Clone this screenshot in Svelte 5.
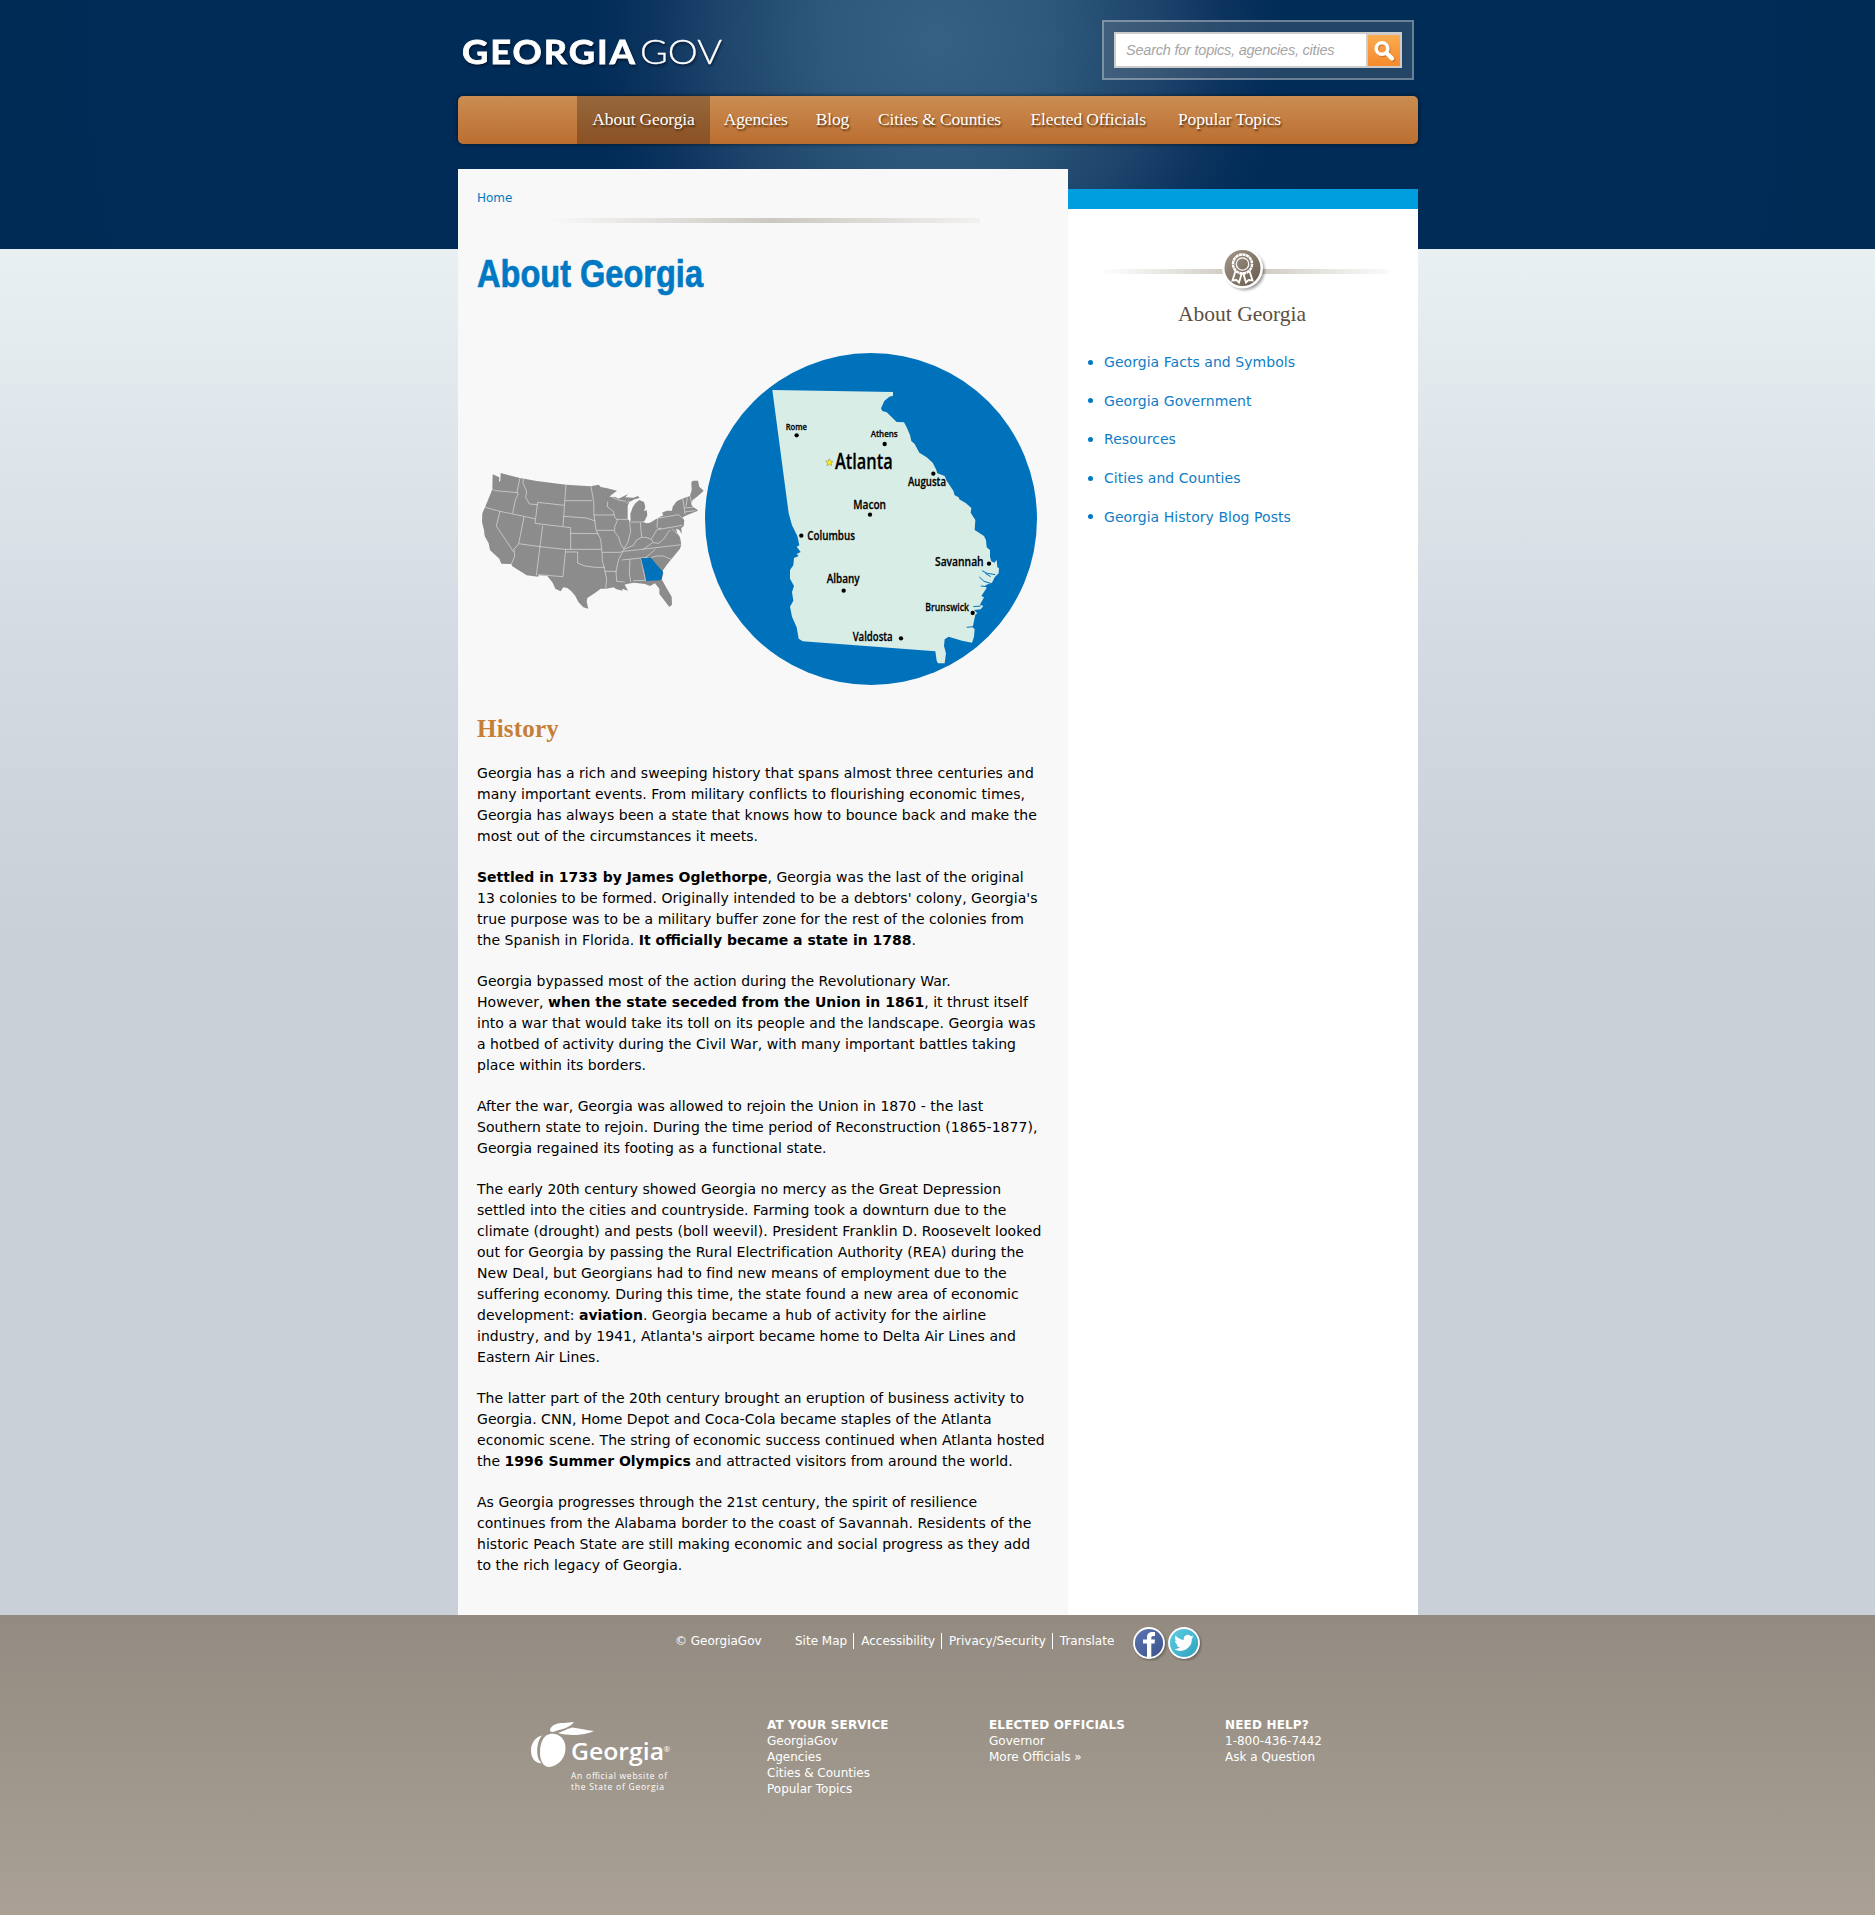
<script>
  const nav = ['About Georgia', 'Agencies', 'Blog', 'Cities & Counties', 'Elected Officials', 'Popular Topics'];
  const navWidths = [133, 91.5, 62, 152, 145.5, 137];
  const links = ['Georgia Facts and Symbols', 'Georgia Government', 'Resources', 'Cities and Counties', 'Georgia History Blog Posts'];
  const paragraphs = [
    ['Georgia has a rich and sweeping history that spans almost three centuries and', 'many important events. From military conflicts to flourishing economic times,', 'Georgia has always been a state that knows how to bounce back and make the', 'most out of the circumstances it meets.'],
    ['*Settled in 1733 by James Oglethorpe*, Georgia was the last of the original', "13 colonies to be formed. Originally intended to be a debtors' colony, Georgia's", 'true purpose was to be a military buffer zone for the rest of the colonies from', 'the Spanish in Florida. *It officially became a state in 1788*.'],
    ['Georgia bypassed most of the action during the Revolutionary War.', 'However, *when the state seceded from the Union in 1861*, it thrust itself', 'into a war that would take its toll on its people and the landscape. Georgia was', 'a hotbed of activity during the Civil War, with many important battles taking', 'place within its borders.'],
    ['After the war, Georgia was allowed to rejoin the Union in 1870 - the last', 'Southern state to rejoin. During the time period of Reconstruction (1865-1877),', 'Georgia regained its footing as a functional state.'],
    ['The early 20th century showed Georgia no mercy as the Great Depression', 'settled into the cities and countryside. Farming took a downturn due to the', 'climate (drought) and pests (boll weevil). President Franklin D. Roosevelt looked', 'out for Georgia by passing the Rural Electrification Authority (REA) during the', 'New Deal, but Georgians had to find new means of employment due to the', 'suffering economy. During this time, the state found a new area of economic', 'development: *aviation*. Georgia became a hub of activity for the airline', "industry, and by 1941, Atlanta's airport became home to Delta Air Lines and", 'Eastern Air Lines.'],
    ['The latter part of the 20th century brought an eruption of business activity to', 'Georgia. CNN, Home Depot and Coca-Cola became staples of the Atlanta', 'economic scene. The string of economic success continued when Atlanta hosted', 'the *1996 Summer Olympics* and attracted visitors from around the world.'],
    ['As Georgia progresses through the 21st century, the spirit of resilience', 'continues from the Alabama border to the coast of Savannah. Residents of the', 'historic Peach State are still making economic and social progress as they add', 'to the rich legacy of Georgia.']
  ];
  const footerCols = [
    { title: 'AT YOUR SERVICE', items: ['GeorgiaGov', 'Agencies', 'Cities & Counties', 'Popular Topics'] },
    { title: 'ELECTED OFFICIALS', items: ['Governor', 'More Officials »'] },
    { title: 'NEED HELP?', items: ['1-800-436-7442', 'Ask a Question'] }
  ];
  // name, text x, baseline, text width, font size, dot x, dot y (in thirds of a pixel)
  const cities = [
    ['Rome', 287, 269, 64, 28, 320, 286],
    ['Athens', 542, 291, 81, 28, 584, 312],
    ['Augusta', 654, 438, 114, 35, 730, 401],
    ['Macon', 490, 506, 98, 35, 540, 524],
    ['Columbus', 352, 600, 143, 38, 334, 587],
    ['Savannah', 735, 679, 146, 38, 897, 671],
    ['Albany', 410, 729, 99, 36, 461, 752],
    ['Brunswick', 706, 812, 131, 34, 848, 819],
    ['Valdosta', 488, 903, 120, 36, 633, 895]
  ];
</script>

<div class="page">
  <header>
    <div class="wrap">
      <div class="top">
        <svg class="logo" width="270" height="40" viewBox="0 0 270 40">
          <text class="logo-bold" x="0" y="32" textLength="175" lengthAdjust="spacingAndGlyphs">GEORGIA</text>
          <text class="logo-thin" x="178" y="32" textLength="82" lengthAdjust="spacingAndGlyphs">GOV</text>
        </svg>
        <div class="search">
          <div class="field">Search for topics, agencies, cities</div>
          <div class="go">
            <svg width="32" height="31" viewBox="0 0 32 31"><g fill="none" stroke="#7b4a1c" stroke-opacity=".35" transform="translate(1.2 1.2)"><circle cx="14" cy="13.500" r="5.800" stroke-width="3.600"/><path d="M18.500 18l5.500 5.500" stroke-width="4.400" stroke-linecap="round"/></g><g fill="none" stroke="#fff"><circle cx="14" cy="13.500" r="5.800" stroke-width="3.600"/><path d="M18.500 18l5.500 5.500" stroke-width="4.400" stroke-linecap="round"/></g></svg>
          </div>
        </div>
      </div>
      <nav>
        {#each nav as item, i}
          <a class:active={i === 0} style:width="{navWidths[i]}px">{item}</a>
        {/each}
      </nav>
    </div>
  </header>

  <div class="wrap body">
    <main>
      <div class="crumb">Home</div>
      <div class="rule"></div>
      <svg class="title" width="230" height="50" viewBox="0 0 230 50"><text x="0" y="36" textLength="226" lengthAdjust="spacingAndGlyphs">About Georgia</text></svg>
      <svg class="map" width="570" height="360" viewBox="470 340 570 360">
        <g transform="translate(470 450) scale(.33333)">
          <path fill="#8c8c8c" d="M68 73L88 82 87 96 91 92 92 69 150 84 200 93 288 104 362 109 386 104 392 111 412 115 441 122 428 132 418 140 436 141 446 146 474 132 466 142 490 143 504 138 509 144 494 148 478 156 473 168 473 208 482 214 481 192 488 172 496 160 508 150 522 156 526 170 522 184 530 180 532 196 524 212 518 216 530 220 540 218 562 205 580 196 576 188 590 182 606 182 608 170 620 154 636 146 660 138 665 120 664 96 670 92 684 92 688 110 701 122 684 138 668 150 664 162 668 170 680 178 684 182 650 196 638 202 643 212 641 228 634 234 635 252 628 240 618 236 622 250 630 262 634 284 630 296 612 318 604 328 590 345 578 362 580 370 575 388 590 415 605 440 606 464 598 471 582 450 568 432 568 416 555 400 540 408 525 402 492 398 470 402 464 404 474 422 456 416 458 422 440 418 430 412 410 416 392 416 376 428 352 444 350 455 355 476 340 472 325 456 316 438 304 424 292 414 280 412 272 424 256 416 248 398 232 378 206 376 204 380 170 376 127 349 124 342 94 341 88 326 66 306 60 300 56 280 44 258 42 240 36 216 37 190 45 172 54 150 67 118z"/>
          <g fill="none" stroke="#fff" stroke-opacity=".85" stroke-width="1.700">
            <path d="M67 118L76 122 100 124 143 128M150 84L141 126 145 132 136 150 128 190M160 87L159 100 170 124 167 142 178 162 203 164M45 172L90 184 195 206M90 184L79 228 131 306M145 282L138 292 132 296 134 320 124 342M203 157L283 166M203 157L195 220 302 233M162 201L146 281 210 290 284 298M218 227L199 376M288 104L279 229M284 152H367M281 199L349 204 376 213M302 233V298M302 250L386 251M284 298H394M287 298L279 380 204 374M287 306H323V339L345 348 375 352 404 352M363 109L371 155 372 195 378 240 392 268 396 307 397 332 403 355 410 388 407 416M371 195H432M380 241H432M396 307H450L458 304M404 364H440M413 155L412 170 430 184 434 200 442 212 434 230 434 246 446 262 452 282 462 298 446 328 438 364 440 394 464 396M440 208H473M478 209L482 244 474 276 462 296M424 140L444 150 468 154M482 216L518 216M511 218L515 262 500 270 490 286 462 298M515 262L528 262 544 268 560 240 574 234M563 204L561 230 568 238 636 226M561 205L626 194 638 206M638 145L643 175 645 192M652 142L648 170M660 138L666 164M643 174L668 172M643 186L676 182M460 304L516 298 634 284M456 330L532 322M480 328L478 370 482 396M513 325L526 390M490 392L528 391M526 324L556 298M543 323L560 318 580 318 604 328M544 268L550 278 566 280 580 268 594 248 600 240M606 236L624 254M520 298L548 278M478 152L470 160"/>
          </g>
          <path fill="#0072bc" d="M513 325L543 323 560 344 579 365 575 388 569 391 529 393 524 368z"/>
        </g>
        <g transform="translate(690 340) scale(.33333)">
          <circle cx="543" cy="537" r="498" fill="#0072bc"/>
          <path fill="#d9ede7" d="M247 150L609 156 609 167 598 170 583 183 573 205 577 213 590 217 604 230 620 246 642 247 650 262 660 285 664 303 674 312 688 338 710 352 728 368 738 388 742 400 764 408 770 422 778 434 790 452 794 466 806 472 808 478 828 490 844 504 842 518 856 540 854 570 882 588 888 600 890 622 900 630 900 652 904 664 913 668 920 660 922 682 927 684 926 700 914 712 906 728 886 736 890 744 874 768 882 772 870 794 880 798 872 808 852 810 862 820 856 824 848 862 854 868 852 890 846 908 816 902 776 890 764 898 762 918 768 940 764 970 744 970 740 962 736 934 338 904 326 896 320 862 306 830 300 800 310 782 306 756 312 738 300 716 300 690 310 676 312 654 326 648 320 642 332 636 320 620 328 616 322 588 306 556 296 520z"/>
          <g fill="none" stroke="#0072bc" stroke-width="3"><path d="M876 692L892 700 916 704M886 700L902 710M868 711L882 724 902 730M872 738L892 740M850 800L872 798M830 862L850 860"/></g>
          {#each cities as c}
            <text class="city" x={c[1]} y={c[2]} font-size={c[4]} textLength={c[3]} lengthAdjust="spacingAndGlyphs">{c[0]}</text>
            <circle cx={c[5]} cy={c[6]} r="6.500" />
          {/each}
          <text class="city" x="435" y="388" font-size="62" textLength="173" lengthAdjust="spacingAndGlyphs">Atlanta</text>
          <path fill="#ffec19" stroke="#8d8730" stroke-width="1.500" d="M418 356l3 7 8 1-6 5 2 8-7-4-7 4 2-8-6-5 8-1z"/>
        </g>
      </svg>
      <h2>History</h2>
      {#each paragraphs as lines}
        <p>
          {#each lines as line}
            <span class="line">{#each line.split('*') as part, k}{#if k % 2}<b>{part}</b>{:else}{part}{/if}{/each}</span>
          {/each}
        </p>
      {/each}
    </main>
    <aside>
      <div class="ribbon">
        <svg width="350" height="60" viewBox="0 0 350 60">
          <defs>
            <linearGradient id="fade"><stop offset="0" stop-color="#d0ccc4" stop-opacity="0"/><stop offset=".5" stop-color="#c8c4ba"/><stop offset="1" stop-color="#d0ccc4" stop-opacity=".1"/></linearGradient>
            <linearGradient id="disc" x2="1" y2="1"><stop offset="0" stop-color="#a3988a"/><stop offset="1" stop-color="#675a4b"/></linearGradient>
            <filter id="soft" x="-30%" y="-30%" width="160%" height="160%"><feGaussianBlur stdDeviation="1.500"/></filter>
          </defs>
          <rect x="31" y="20" width="290" height="5" fill="url(#fade)"/>
          <circle cx="177" cy="21.500" r="19.500" fill="#000" opacity=".4" filter="url(#soft)"/>
          <circle cx="174.500" cy="19" r="20.500" fill="#fff"/>
          <circle cx="174.500" cy="19" r="18" fill="url(#disc)"/>
          <g fill="none" stroke="#fff">
            <circle cx="174.500" cy="15" r="9.500" stroke-width="2.500" stroke-dasharray="3.200 .5"/>
            <circle cx="174.500" cy="15" r="6.200" stroke-width="1.300"/>
            <path stroke-width="1.800" d="M167.500 22l-3 9.500 4-.5 2.500 2.500 3-10M181.500 22l3 9.500-4-.5-2.500 2.500-3-10"/>
          </g>
        </svg>
      </div>
      <h3>About Georgia</h3>
      <ul>
        {#each links as link}<li><i></i>{link}</li>{/each}
      </ul>
    </aside>
  </div>

  <footer>
    <div class="legal">
      <span class="copy">© GeorgiaGov</span>
      <span class="sep">Site Map</span><span class="sep">Accessibility</span><span class="sep">Privacy/Security</span><span class="last">Translate</span>
      <svg width="70" height="36" viewBox="0 0 70 36">
        <defs>
          <linearGradient id="fb" x2="1" y2="1"><stop offset="0" stop-color="#5d77b5"/><stop offset="1" stop-color="#3a5187"/></linearGradient>
          <linearGradient id="tw" x2="1" y2="1"><stop offset="0" stop-color="#5cd0e6"/><stop offset="1" stop-color="#2f9fbb"/></linearGradient>
        </defs>
        <g fill="#000" opacity=".35" filter="url(#soft)"><circle cx="18.500" cy="19.500" r="15.500"/><circle cx="53.500" cy="19.500" r="15.500"/></g>
        <circle cx="17" cy="18" r="15" fill="url(#fb)" stroke="#fff" stroke-width="1.800"/>
        <circle cx="52" cy="18" r="15" fill="url(#tw)" stroke="#fff" stroke-width="1.800"/>
        <path fill="#fff" d="M15 33V18.500h-4v-4h4V12.500c0-3.900 2.200-5.500 5.500-5.500H23v4h-1.700c-1.600 0-2 .7-2 2v1.500H23l-.5 4h-3.200V33z"/>
        <path fill="#fff" transform="translate(42.200 8) scale(.82)" d="M24 4.600a10 10 0 0 1-2.800.8 5 5 0 0 0 2.100-2.700c-1 .6-2 1-3.100 1.200a4.900 4.900 0 0 0-8.400 4.500A14 14 0 0 1 1.700 3.200a4.900 4.900 0 0 0 1.500 6.500c-.8 0-1.500-.2-2.200-.6a4.900 4.900 0 0 0 3.900 4.900c-.7.200-1.500.2-2.200.1a4.900 4.900 0 0 0 4.600 3.400A10 10 0 0 1 0 19.500 14 14 0 0 0 21.500 7.100c1-.7 1.800-1.500 2.500-2.500z"/>
      </svg>
    </div>
    <div class="cols">
      <svg class="peach" width="150" height="80" viewBox="0 0 150 80">
        <g fill="#fff">
          <path d="M16 15.500c9-5 19.500 1 19.500 12.500 0 10-6 16-13.500 18.500-8 2.500-12-5.500-12-13.500 0-8 2-14 6-17.500z"/>
          <path d="M12 15.500C7 21 6 32 8.500 39l3 4.500C5 43 1 38 1 30.500c0-8 5-13.500 11-15z"/>
          <path d="M20 9.500c2-5 7-6.500 14-6.500l10-1c-4 5-9 6.500-15 8-4 1-9 4-9-.5z"/>
          <path d="M28 13c3-1 9-4 14-5.500 6 1 15 2.500 22 3.500-8 4-24 5.500-36 2z"/>
          <text class="pg" x="41" y="39.500" textLength="93" lengthAdjust="spacingAndGlyphs">Georgia</text>
          <text class="pr" x="133.500" y="32">®</text>
          <text class="ps" x="41" y="58.500" textLength="96">An official website of</text>
          <text class="ps" x="41" y="70" textLength="93">the State of Georgia</text>
        </g>
      </svg>
      {#each footerCols as col}
        <div class="col"><b>{col.title}</b>{#each col.items as item}<span>{item}</span>{/each}</div>
      {/each}
    </div>
  </footer>
</div>

<style>
  :global(body) { margin: 0; }
  .page { min-height: 1915px; display: flex; flex-direction: column; font-family: 'DejaVu Sans', sans-serif; background: linear-gradient(#e9f0f2 249px, #d4dae2 650px, #c9d0d8 940px); }
  .wrap { width: 960px; margin: 0 auto 0 458px; }
  header { height: 249px; background: radial-gradient(circle at 937px 40px, #366184 0, #2f597c 110px, #1d446b 220px, #0b335e 290px, #002c57 350px, #002b55 100%); }
  .top { display: flex; justify-content: space-between; height: 76px; padding: 20px 4px 0 4px; }
  .logo { margin-top: 12px; filter: drop-shadow(1px 2px 1px rgba(0, 10, 30, 0.6)); fill: #fff; }
  .logo-bold { font: 700 33px Lato, sans-serif; letter-spacing: 1.800px; stroke: #fff; stroke-width: 0.8px; }
  .logo-thin { font: 300 33px Lato, sans-serif; stroke: #fff; stroke-width: 0.3px; }
  .search { box-sizing: border-box; width: 312px; height: 60px; border: 2px solid rgba(255, 255, 255, 0.32); background: rgba(160, 160, 160, 0.22); padding: 10px; display: flex; }
  .field { box-sizing: border-box; width: 254px; height: 36px; border: 2px solid #ccc; background: #fff; color: #a5a5a5; font: italic 14.500px/32px 'Liberation Sans', sans-serif; letter-spacing: -0.220px; padding-left: 10px; white-space: nowrap; }
  .go { box-sizing: border-box; width: 34px; height: 36px; border: 2px solid #ccc; border-width: 3px 2px 2px 0; background: linear-gradient(#fbab50, #f6892c); }
  .go svg { display: block; }
  nav { box-sizing: border-box; height: 48px; padding-left: 119px; display: flex; border-radius: 5px; background: linear-gradient(#cb8d52, #bc6e31); box-shadow: 0 0 4px rgba(0, 0, 0, 0.6); }
  nav a { text-align: center; color: #fff; font: 17.500px/47px 'Liberation Serif', serif; letter-spacing: -0.140px; text-shadow: 1px 2px 2px rgba(60, 30, 0, 0.8); white-space: nowrap; }
  nav a.active { background: rgba(0, 0, 0, 0.26); }
  .body { flex: none; display: flex; height: 1446px; margin-top: -80px; }
  main { box-sizing: border-box; width: 610px; background: #f8f8f8; padding: 20px 0 0 19px; }
  .crumb { color: #0079c4; font-size: 12px; line-height: 18px; }
  .rule { width: 430px; height: 5px; margin: 11px 0 0 73px; background: linear-gradient(90deg, rgba(205, 201, 192, 0), #ccc8c0 52%, rgba(205, 201, 192, 0.15)); }
  .title { display: block; margin-top: 28px; overflow: visible; font: 700 39px 'Liberation Sans Narrow', 'Liberation Sans', sans-serif; fill: #0079c4; stroke: #0079c4; stroke-width: 0.7px; }
  .map { display: block; margin: 39px 0 0 -7px; font-family: 'Open Sans', sans-serif; font-weight: 600; }
  .city { stroke: #000; stroke-width: 0.8px; }
  h2 { margin: 14px 0 20px; color: #c67f38; font: 700 25px/29px 'Liberation Serif', serif; letter-spacing: 0.200px; }
  p { margin: 0 0 20px; font-size: 14px; line-height: 21px; letter-spacing: 0.035px; color: #000; }
  b { letter-spacing: 0; }
  .line { display: block; white-space: nowrap; }
  aside { box-sizing: border-box; width: 350px; margin-top: 20px; border-top: 20px solid #009ddf; background: #fff; }
  .ribbon { margin-top: 40px; height: 60px; }
  .ribbon svg, .peach { display: block; }
  h3 { margin: -7px 2px 0 0; text-align: center; color: #5c4f42; font: 400 21.500px/24px 'Liberation Serif', serif; }
  ul { list-style: none; margin: 26px 0 0 20px; padding: 0; }
  li { display: flex; align-items: center; color: #0f7dc5; font-size: 14px; line-height: 20px; letter-spacing: 0.050px; margin-bottom: 18.700px; }
  i { width: 5px; height: 5px; border-radius: 50%; background: #0079c4; margin-right: 11px; }
  footer { flex: 1; background: linear-gradient(#938b81, #aaa194); color: #fff; font-size: 12px; }
  .legal { display: flex; height: 72px; padding: 10px 0 0 675px; line-height: 16px; box-sizing: border-box; }
  .legal span { margin-top: 8px; height: 16px; white-space: nowrap; }
  .copy { width: 120px; }
  .sep { border-right: 1px solid #fff; padding-right: 6px; margin-right: 7px; }
  .last { margin-right: 18px; }
  .cols { display: flex; padding: 30px 0 0 530px; }
  .peach { margin-top: 3px; width: 150px; overflow: visible; }
  .pg { font: 600 24px 'Open Sans', sans-serif; }
  .pr { font: 8px 'Open Sans', sans-serif; }
  .ps { font: 8.500px 'Open Sans', sans-serif; }
  .col { display: flex; flex-direction: column; line-height: 16px; white-space: nowrap; width: 236px; }
  .col b { letter-spacing: 0.170px; }
  .peach + .col { margin-left: 87px; width: 222px; }
</style>
